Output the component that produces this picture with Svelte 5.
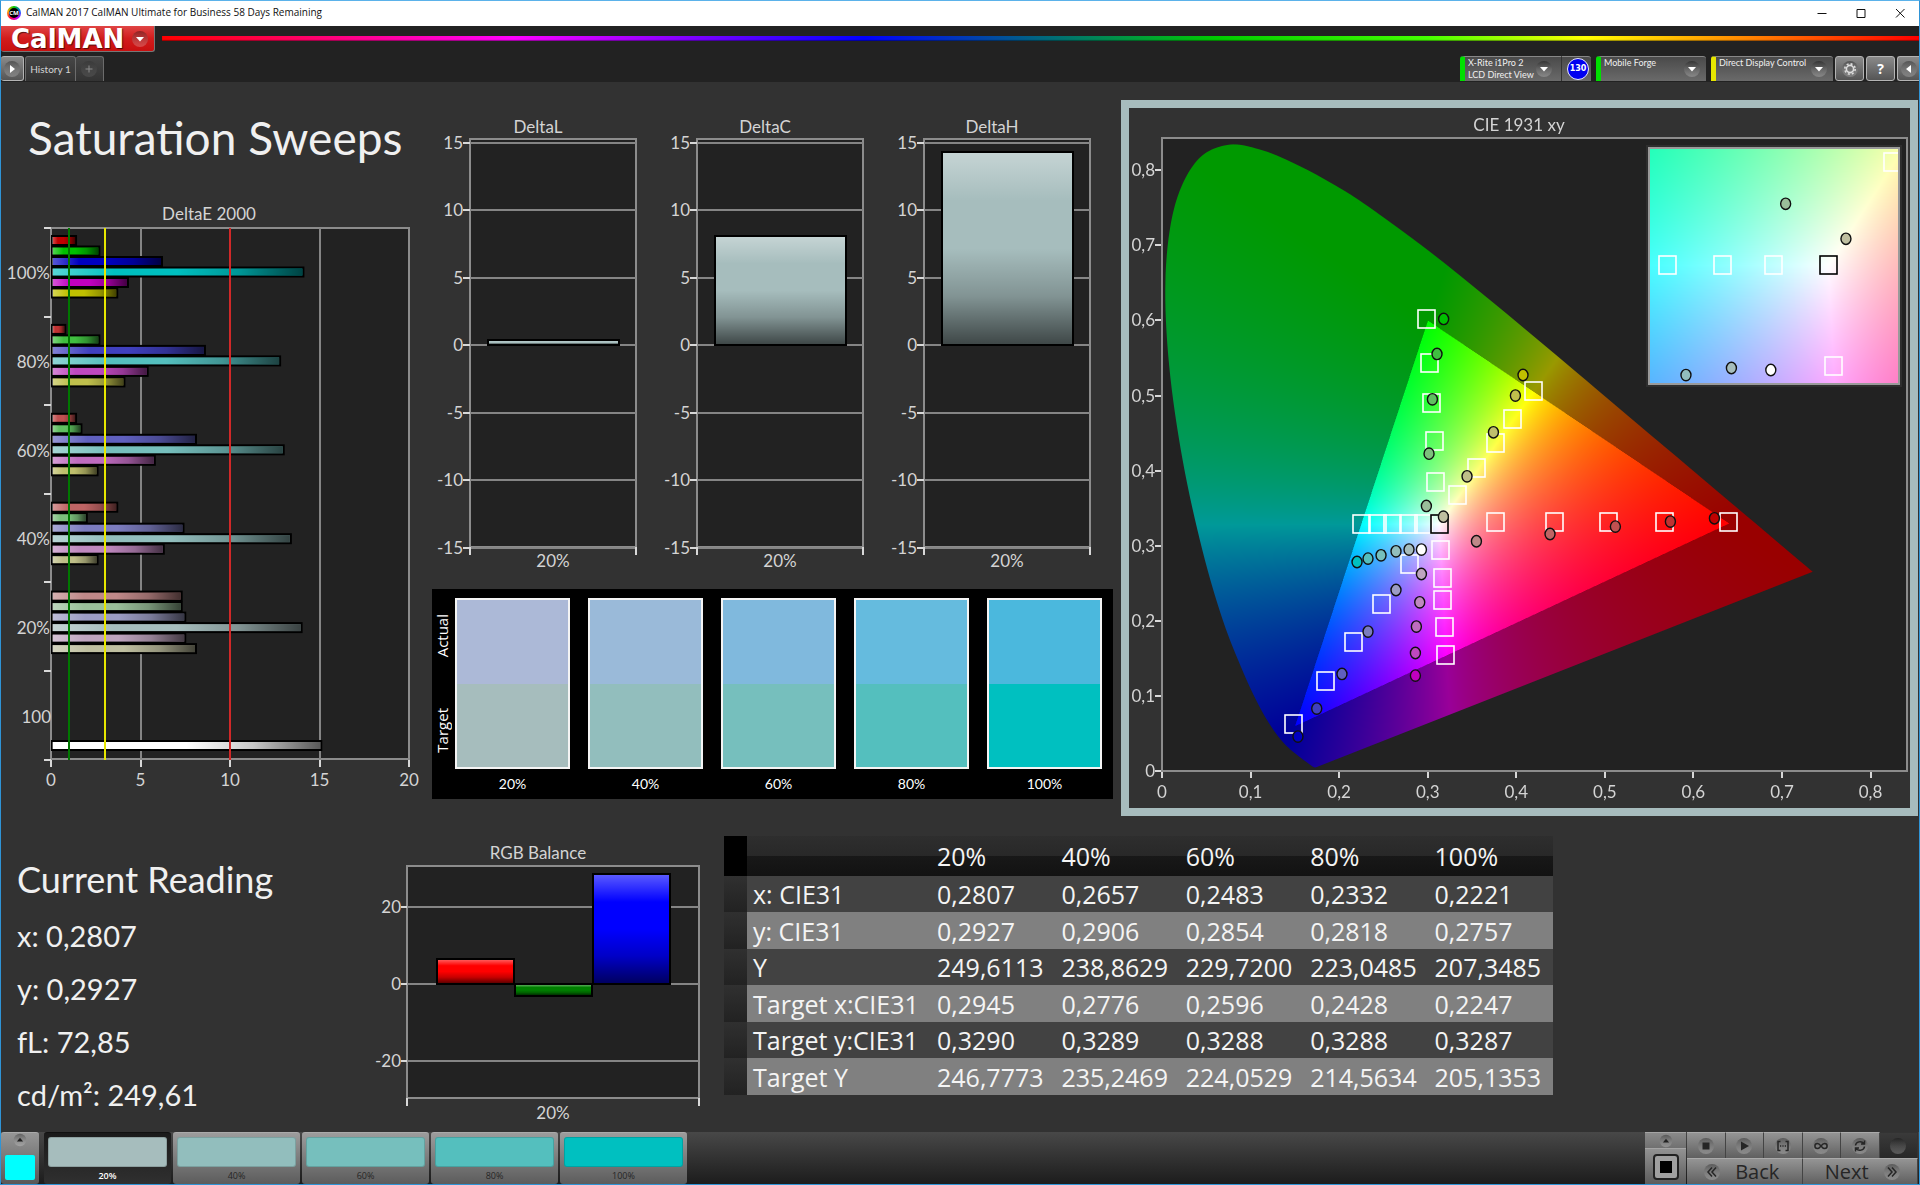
<script lang="ts">
  type Point = [number, number];
  type Kind = 'square' | 'circle';

  const levels = ['20%', '40%', '60%', '80%', '100%'];
  const targetColors = ['#a6bdbd', '#92bebd', '#76bfbd', '#54bfbe', '#00c0c0'];
  const actualColors = ['#acb9d7', '#9abad9', '#80b9dd', '#65bbde', '#4bb8dd'];

  // Bar and marker colours by saturation, red / green / blue / cyan / magenta / yellow
  const palette: Record<string, string[]> = {
    '100%': ['#c00000', '#00c000', '#0000c0', '#00c0c0', '#c000c0', '#c0c000'],
    '80%': ['#c03232', '#40bf40', '#4040bf', '#54bfbe', '#bf48bf', '#bfbf4c'],
    '60%': ['#c05050', '#60bf60', '#6060bf', '#76bfbd', '#bf6cbf', '#bfbf6c'],
    '40%': ['#bf6464', '#7cbf7c', '#7c7cbf', '#92bebd', '#bf88bf', '#bfbf88'],
    '20%': ['#bf8888', '#9abf9a', '#9c9cc4', '#a6bdbd', '#bfa4bf', '#bfbfa0']
  };

  // ---- DeltaE 2000 ----
  const deltaE = [
    { label: '100%', values: [1.4, 2.7, 6.2, 14.1, 4.3, 3.7] },
    { label: '80%', values: [0.8, 2.7, 8.6, 12.8, 5.4, 4.1] },
    { label: '60%', values: [1.4, 1.7, 8.1, 13.0, 5.8, 2.6] },
    { label: '40%', values: [3.7, 2.0, 7.4, 13.4, 6.3, 2.6] },
    { label: '20%', values: [7.3, 7.3, 7.5, 14.0, 7.5, 8.1] }
  ];
  const limits = [
    { at: 1, color: '#007800' },
    { at: 3, color: '#e6e600' },
    { at: 10, color: '#d02828' }
  ];
  const ex = (v: number) => 50 + v * 17.9;
  const ey = (row: number) => Math.round(28 + row * 88.6);

  // ---- DeltaL / DeltaC / DeltaH ----
  const deltas = [
    { title: 'DeltaL', value: 0.4 },
    { title: 'DeltaC', value: 8.1 },
    { title: 'DeltaH', value: 14.3 }
  ];
  const dy = (v: number) => Math.round(236 - v * 13.5);

  // ---- RGB balance ----
  const rgb = [
    { color: '#ff0000', value: 6.5 },
    { color: '#008000', value: -3 },
    { color: '#0000ff', value: 28.5 }
  ];
  const by = (v: number) => Math.round(144 - v * 3.85);

  // ---- CIE 1931 ----
  const CIE_W = 781;
  const CIE_H = 700;
  const cx = (x: number) => 33 + x * 885.7;
  const cy = (y: number) => 663 - y * 751;

  const INSET = { left: 520, top: 40, width: 250, height: 236, x0: 0.2535, y0: 0.37 };
  const ix = (x: number) => INSET.left + (x - INSET.x0) * 3030;
  const iy = (y: number) => INSET.top + (INSET.y0 - y) * 2846;

  // Spectral locus, 380 to 700 nm
  const locus: Point[] = [
    [0.1741, 0.005], [0.1714, 0.0051], [0.1644, 0.0109], [0.1566, 0.0177], [0.144, 0.0297],
    [0.1355, 0.0399], [0.1241, 0.0578], [0.1096, 0.0868], [0.0913, 0.1327], [0.0687, 0.2007],
    [0.0454, 0.295], [0.0235, 0.4127], [0.0082, 0.5384], [0.0039, 0.6548], [0.0139, 0.7502],
    [0.0389, 0.812], [0.0743, 0.8338], [0.1142, 0.8262], [0.1547, 0.8059], [0.1929, 0.7816],
    [0.2296, 0.7543], [0.3016, 0.6923], [0.3731, 0.6245], [0.4441, 0.5547], [0.5125, 0.4866],
    [0.5752, 0.4242], [0.627, 0.3725], [0.6658, 0.334], [0.6915, 0.3083], [0.7347, 0.2653]
  ];

  const targets: Point[] = [
    [0.2985, 0.6015], [0.3019, 0.5433], [0.3034, 0.49], [0.3071, 0.439], [0.3087, 0.3853],
    [0.4189, 0.5065], [0.3956, 0.4692], [0.376, 0.4367], [0.355, 0.4035], [0.3335, 0.367],
    [0.6395, 0.3316], [0.5668, 0.3316], [0.5032, 0.3316], [0.443, 0.3316], [0.376, 0.3316],
    [0.2247, 0.3287], [0.2428, 0.3288], [0.2596, 0.3288], [0.2776, 0.3289], [0.2945, 0.329],
    [0.3192, 0.155], [0.318, 0.1923], [0.3158, 0.2273], [0.3158, 0.257], [0.3143, 0.2948],
    [0.1484, 0.0626], [0.1837, 0.1204], [0.2153, 0.1714], [0.2469, 0.222], [0.2793, 0.2762]
  ];

  // One list per hue, 100% saturation first
  const readings: Point[][] = [
    [[0.6237, 0.3365], [0.574, 0.3321], [0.5119, 0.3254], [0.4381, 0.3156], [0.355, 0.3059]],
    [[0.318, 0.6019], [0.3105, 0.5553], [0.3053, 0.4949], [0.3015, 0.4226], [0.2985, 0.3529]],
    [[0.1535, 0.0458], [0.1747, 0.0831], [0.2032, 0.1292], [0.2326, 0.1856], [0.2642, 0.241]],
    [[0.2202, 0.2783], [0.2326, 0.2828], [0.2473, 0.2872], [0.2642, 0.2925], [0.2789, 0.2948]],
    [[0.2861, 0.127], [0.2861, 0.1571], [0.2872, 0.1923], [0.291, 0.2246], [0.2929, 0.2623]],
    [[0.4076, 0.5273], [0.399, 0.4999], [0.3742, 0.451], [0.3444, 0.3924], [0.3177, 0.3387]]
  ];
  const order = ['100%', '80%', '60%', '40%', '20%'];

  const insetTargets: Point[] = [[0.2596, 0.329], [0.2776, 0.329], [0.2945, 0.329], [0.3141, 0.2934], [0.3337, 0.3652]];
  const insetReadings: { at: Point; color: string }[] = [
    { at: [0.2986, 0.3504], color: '#9abf9a' },
    { at: [0.3185, 0.3381], color: '#bfbfa0' },
    { at: [0.2657, 0.2902], color: '#92bebd' },
    { at: [0.2807, 0.2927], color: '#a6bdbd' },
    { at: [0.2937, 0.292], color: '#ffffff' }
  ];

  // xy -> linear RGB at full brightness, dimmed outside the display gamut
  function chroma(x: number, y: number): number[] {
    const X = x / y;
    const Z = (1 - x - y) / y;
    const lin = [
      3.2406 * X - 1.5372 - 0.4986 * Z,
      -0.9689 * X + 1.8758 + 0.0415 * Z,
      0.0557 * X - 0.204 + 1.057 * Z
    ];
    const dim = Math.min(...lin) < 0 ? 0.6 : 1;
    const max = Math.max(...lin);
    return lin.map((c) => (Math.max(c, 0) / max) * 255 * dim);
  }

  function locusPath(): Path2D {
    const p = locus.map(([x, y]) => [cx(x), cy(y)]);
    const path = new Path2D();
    path.moveTo(p[0][0], p[0][1]);
    for (let i = 0; i < p.length - 1; i++) {
      const a = p[Math.max(i - 1, 0)];
      const b = p[i];
      const c = p[i + 1];
      const d = p[Math.min(i + 2, p.length - 1)];
      path.bezierCurveTo(
        b[0] + (c[0] - a[0]) / 6, b[1] + (c[1] - a[1]) / 6,
        c[0] - (d[0] - b[0]) / 6, c[1] - (d[1] - b[1]) / 6,
        c[0], c[1]
      );
    }
    path.closePath();
    return path;
  }

  let field = $state<HTMLCanvasElement>();
  const SCALE = 2;

  $effect(() => {
    const ctx = field?.getContext('2d');
    if (!ctx) return;
    const w = CIE_W * SCALE;
    const h = CIE_H * SCALE;
    const img = ctx.createImageData(w, h);
    for (let j = 0; j < h; j++) {
      const y = Math.max((663 - j / SCALE) / 751, 0.001);
      for (let i = 0; i < w; i++) {
        const [r, g, b] = chroma((i / SCALE - 33) / 885.7, y);
        img.data.set([r, g, b, 255], (j * w + i) * 4);
      }
    }
    ctx.putImageData(img, 0, 0);
    ctx.scale(SCALE, SCALE);
    ctx.globalCompositeOperation = 'destination-in';
    ctx.fill(locusPath());

    // Enlarged view round the white point
    const iw = INSET.width * SCALE;
    const ih = INSET.height * SCALE;
    const zoomed = ctx.createImageData(iw, ih);
    for (let j = 0; j < ih; j++) {
      for (let i = 0; i < iw; i++) {
        const [r, g, b] = chroma(INSET.x0 + i / SCALE / 3030, INSET.y0 - j / SCALE / 2846);
        zoomed.data.set([r, g, b, 255], (j * iw + i) * 4);
      }
    }
    ctx.putImageData(zoomed, INSET.left * SCALE, INSET.top * SCALE);
  });

  const tenths = [0, 1, 2, 3, 4, 5, 6, 7, 8];
  const tenth = (n: number) => (n ? `0,${n}` : '0');

  const rows = [
    ['x: CIE31', '0,2807', '0,2657', '0,2483', '0,2332', '0,2221'],
    ['y: CIE31', '0,2927', '0,2906', '0,2854', '0,2818', '0,2757'],
    ['Y', '249,6113', '238,8629', '229,7200', '223,0485', '207,3485'],
    ['Target x:CIE31', '0,2945', '0,2776', '0,2596', '0,2428', '0,2247'],
    ['Target y:CIE31', '0,3290', '0,3289', '0,3288', '0,3288', '0,3287'],
    ['Target Y', '246,7773', '235,2469', '224,0529', '214,5634', '205,1353']
  ];

  let selected = $state('20%');
</script>

{#snippet marker(kind: Kind, x: number, y: number, color: string)}
  {#if kind === 'square'}
    <rect x={Math.round(x) - 8} y={Math.round(y) - 9} width="17" height="18" fill="none" stroke={color} stroke-width="1.6" />
  {:else}
    <ellipse cx={x} cy={y} rx="5" ry="5.7" fill={color} stroke="#101010" stroke-width="1.4" />
  {/if}
{/snippet}

{#snippet knob(path: string)}
  <svg class="knob" viewBox="0 0 18 18" aria-hidden="true">
    <circle cx="9" cy="9" r="8" fill="url(#knob)" />
    <path d={path} />
  </svg>
{/snippet}

<svg class="defs" width="0" height="0" aria-hidden="true">
  <defs>
    <linearGradient id="glossX" x1="0" y1="0" x2="1" y2="0">
      <stop offset="0" stop-color="#fff" stop-opacity="0.35" />
      <stop offset="0.25" stop-color="#fff" stop-opacity="0" />
      <stop offset="0.5" stop-color="#000" stop-opacity="0" />
      <stop offset="0.75" stop-color="#000" stop-opacity="0.22" />
      <stop offset="1" stop-color="#000" stop-opacity="0.65" />
    </linearGradient>
    <linearGradient id="glossY" x1="0" y1="0" x2="0" y2="1">
      <stop offset="0" stop-color="#fff" stop-opacity="0.35" />
      <stop offset="0.25" stop-color="#fff" stop-opacity="0" />
      <stop offset="0.5" stop-color="#000" stop-opacity="0" />
      <stop offset="0.75" stop-color="#000" stop-opacity="0.22" />
      <stop offset="1" stop-color="#000" stop-opacity="0.62" />
    </linearGradient>
    <linearGradient id="knob" x1="0" y1="0" x2="0" y2="1">
      <stop offset="0" stop-color="#000" stop-opacity="0.35" />
      <stop offset="1" stop-color="#fff" stop-opacity="0.22" />
    </linearGradient>
  </defs>
</svg>

<div class="window">
  <div class="titlebar">
    <span class="app-icon">CM</span>
    <span class="caption">CalMAN 2017 CalMAN Ultimate for Business 58 Days Remaining</span>
    <button type="button" aria-label="Minimize"><svg viewBox="0 0 10 10"><path d="M0.5 5.5h9" /></svg></button>
    <button type="button" aria-label="Maximize"><svg viewBox="0 0 10 10"><path d="M1 1.5h8v8h-8z" /></svg></button>
    <button type="button" aria-label="Close"><svg viewBox="0 0 10 10"><path d="M1 1l8.500 8.500M9.500 1l-8.500 8.500" /></svg></button>
  </div>

  <header>
    <div class="brand-row">
      <button class="brand" type="button">
        <span>CalMAN</span>
        {@render knob('M5 7h8l-4 4.500z')}
      </button>
      <div class="spectrum"></div>
    </div>
    <div class="tool-row">
      <button class="square first" type="button" aria-label="Expand">{@render knob('M7 5l5 4-5 4z')}</button>
      <button class="tab history" type="button">History 1</button>
      <button class="tab add" type="button" aria-label="Add history">{@render knob('M5.500 8.500h3v-3h1v3h3v1h-3v3h-1v-3h-3z')}</button>
      <span class="spacer"></span>
      <button class="device meter" type="button">
        <span>X-Rite i1Pro 2<br />LCD Direct View</span>
        {@render knob('M5 7h8l-4 4.500z')}
      </button>
      <button class="count" type="button"><b>130</b></button>
      <button class="device source" type="button">
        <span>Mobile Forge</span>
        {@render knob('M5 7h8l-4 4.500z')}
      </button>
      <button class="device display" type="button">
        <span>Direct Display Control</span>
        {@render knob('M5 7h8l-4 4.500z')}
      </button>
      <button class="square" type="button" aria-label="Settings">
        <svg class="knob" viewBox="0 0 18 18">
          <circle cx="9" cy="9" r="8" fill="url(#knob)" />
          <circle cx="9" cy="9" r="3.600" class="ring" />
          <circle cx="9" cy="9" r="5.200" class="teeth" />
        </svg>
      </button>
      <button class="square help" type="button" aria-label="Help">?</button>
      <button class="square last" type="button" aria-label="Collapse">{@render knob('M11 5l-5 4 5 4z')}</button>
    </div>
  </header>

  <main>
    <div class="upper">
      <section class="sweeps">
        <h1>Saturation Sweeps</h1>
        <svg class="chart" viewBox="0 0 431 600" role="img" aria-label="DeltaE 2000">
          <text class="mid" x="208" y="20">DeltaE 2000</text>
          <rect class="plot" x="50" y="28" width="358" height="531" />
          {#each [5, 10, 15] as v}
            <line class="grid" x1={Math.round(ex(v))} x2={Math.round(ex(v))} y1="28" y2="559" />
          {/each}
          {#each [0, 5, 10, 15, 20] as v}
            <line class="tick" x1={Math.round(ex(v))} x2={Math.round(ex(v))} y1="560" y2="567" />
            <text class="mid" x={ex(v)} y="586">{v}</text>
          {/each}
          {#each [0, 1, 2, 3, 4, 5, 6] as row}
            <line class="tick" x1="43" x2="50" y1={ey(row)} y2={ey(row)} />
          {/each}
          {#each deltaE as group, g}
            <text class="end" x="49" y={79 + Math.round(g * 88.8)}>{group.label}</text>
            {#each group.values as v, i}
              {@const top = 36 + g * 88.9 + i * 10.5}
              <rect class="bar" x="51" y={top} width={ex(v) - 51} height="9" fill={palette[group.label][i]} />
              <rect x="51" y={top + 1} width={ex(v) - 52} height="7" fill="url(#glossX)" />
            {/each}
          {/each}
          <text class="end" x="50" y="523">100</text>
          <rect class="bar" x="51" y="541" width={ex(15.1) - 51} height="9" fill="#fff" />
          <rect x="51" y="542" width={ex(15.1) - 52} height="7" fill="url(#glossX)" />
          {#each limits as limit}
            <line x1={Math.round(ex(limit.at))} x2={Math.round(ex(limit.at))} y1="28" y2="560" stroke={limit.color} stroke-width="2" />
          {/each}
        </svg>
      </section>

      <section class="middle">
        <div class="deltas">
          {#each deltas as d}
            <svg class="chart" viewBox="0 0 227 470" role="img" aria-label={d.title}>
              <text class="mid" x="106" y="24">{d.title}</text>
              <rect class="plot" x="38" y="30" width="166" height="408" />
              {#each [15, 10, 5, 0, -5, -10, -15] as v}
                <line class="grid" x1="38" x2="204" y1={dy(v)} y2={dy(v)} />
                <line class="tick" x1="31" x2="38" y1={dy(v)} y2={dy(v)} />
                <text class="end" x="31" y={dy(v) + 6}>{v}</text>
              {/each}
              <path class="tick" d="M38 438v8M204 438v8" />
              <rect class="bar" x="56" y={dy(d.value)} width="131" height={236 - dy(d.value)} fill="#a6bdbd" />
              <rect x="57" y={dy(d.value) + 1} width="129" height={234 - dy(d.value)} fill="url(#glossY)" />
              <text class="mid" x="121" y="458">20%</text>
            </svg>
          {/each}
        </div>

        <div class="swatches">
          <div class="side"><span>Actual</span><span>Target</span></div>
          {#each levels as level, i}
            <figure>
              <div class="pair">
                <div style:background={actualColors[i]}></div>
                <div style:background={targetColors[i]}></div>
              </div>
              <figcaption>{level}</figcaption>
            </figure>
          {/each}
        </div>
      </section>

      <section class="cie">
        <svg class="chart" viewBox="0 0 {CIE_W} {CIE_H}" aria-hidden="true">
          <rect class="plot" x="33" y="30" width="745" height="633" />
          <rect x="517" y="37" width="256" height="242" fill="#2e2e2e" />
        </svg>
        <canvas bind:this={field} width={CIE_W * SCALE} height={CIE_H * SCALE}></canvas>
        <svg class="chart overlay" viewBox="0 0 {CIE_W} {CIE_H}" role="img" aria-label="CIE 1931 xy">
          <text class="mid" x="390" y="23">CIE 1931 xy</text>
          {#each tenths as n}
            <line class="tick" x1={Math.round(cx(n / 10))} x2={Math.round(cx(n / 10))} y1="664" y2="670" />
            <text class="mid" x={cx(n / 10)} y="690">{tenth(n)}</text>
            <line class="tick" x1="26" x2="32" y1={Math.round(cy(n / 10))} y2={Math.round(cy(n / 10))} />
            <text class="end" x="26" y={Math.round(cy(n / 10)) + 6}>{tenth(n)}</text>
          {/each}
          {#each targets as [x, y]}
            {@render marker('square', cx(x), cy(y), '#ffffff')}
          {/each}
          {@render marker('square', cx(0.3127), cy(0.329), '#000000')}
          {#each readings as hue, h}
            {#each hue as [x, y], s}
              {@render marker('circle', cx(x), cy(y), palette[order[s]][h])}
            {/each}
          {/each}
          {@render marker('circle', cx(0.2929), cy(0.2948), '#ffffff')}

          <svg x={INSET.left} y={INSET.top} width={INSET.width} height={INSET.height} viewBox="520 40 250 236">
            {#each insetTargets as [x, y]}
              {@render marker('square', ix(x), iy(y), '#ffffff')}
            {/each}
            {@render marker('square', ix(0.3127), iy(0.329), '#000000')}
            {#each insetReadings as r}
              {@render marker('circle', ix(r.at[0]), iy(r.at[1]), r.color)}
            {/each}
          </svg>
          <rect class="frame" x="520" y="40" width="250" height="236" />
        </svg>
      </section>
    </div>

    <div class="lower">
      <section class="reading">
        <h2>Current Reading</h2>
        <p>x: 0,2807</p>
        <p>y: 0,2927</p>
        <p>fL: 72,85</p>
        <p>cd/m²: 249,61</p>
      </section>

      <section class="balance">
        <svg class="chart" viewBox="0 0 354 290" role="img" aria-label="RGB Balance">
          <text class="mid" x="168" y="19">RGB Balance</text>
          <rect class="plot" x="37" y="26" width="292" height="232" />
          {#each [20, 0, -20] as v}
            <line class="grid" x1="37" x2="329" y1={by(v)} y2={by(v)} />
            <line class="tick" x1="31" x2="37" y1={by(v)} y2={by(v)} />
            <text class="end" x="31" y={by(v) + 6}>{v}</text>
          {/each}
          <path class="tick" d="M37 258v8M329 258v8" />
          {#each rgb as bar, i}
            {@const top = Math.min(by(bar.value), 144)}
            {@const height = Math.abs(by(bar.value) - 144)}
            <rect class="bar" x={67 + i * 78} y={top} width="77" {height} fill={bar.color} />
            <rect x={68 + i * 78} y={top + 1} width="75" height={height - 2} fill="url(#glossY)" />
          {/each}
          <text class="mid" x="183" y="279">20%</text>
        </svg>
      </section>

      <section class="data">
        <table>
          <thead>
            <tr>
              <th class="handle"></th>
              <th class="name"></th>
              {#each levels as level}<th scope="col">{level}</th>{/each}
            </tr>
          </thead>
          <tbody>
            {#each rows as [name, ...cells]}
              <tr>
                <td class="handle"></td>
                <th class="name" scope="row">{name}</th>
                {#each cells as cell}<td>{cell}</td>{/each}
              </tr>
            {/each}
          </tbody>
        </table>
      </section>
    </div>
  </main>

  <footer>
    <button class="current" type="button" aria-label="Current colour">
      {@render knob('M5 11h8l-4-5z')}
      <span></span>
    </button>
    <div class="levels">
      {#each levels as level, i}
        <button type="button" class:active={selected === level} onclick={() => (selected = level)}>
          <span style:background={targetColors[i]}></span>
          {level}
        </button>
      {/each}
    </div>
    <span class="spacer"></span>
    <div class="stop">
      <button type="button" aria-label="More">{@render knob('M5 11h8l-4-5z')}</button>
      <button type="button" aria-label="Pattern"><span></span></button>
    </div>
    <div class="transport">
      <button type="button" aria-label="Stop">{@render knob('M5.500 5.500h7v7h-7z')}</button>
      <button type="button" aria-label="Read">{@render knob('M6 4.500l8 4.500-8 4.500z')}</button>
      <button type="button" aria-label="Read series">
        <svg class="knob line" viewBox="0 0 18 18">
          <circle cx="9" cy="9" r="8" fill="url(#knob)" />
          <path d="M6.500 4.500h-2.500v9h2.500M11.500 4.500h2.500v9h-2.500" />
          <path class="dots" d="M6 9h6" />
        </svg>
      </button>
      <button type="button" aria-label="Read continuously">
        <svg class="knob line" viewBox="0 0 18 18">
          <circle cx="9" cy="9" r="8" fill="url(#knob)" />
          <path d="M9 9c-1.500-2-2.500-2.500-3.600-2.500a2.500 2.500 0 0 0 0 5c1.100 0 2.100-.5 3.600-2.500s2.500-2.500 3.600-2.500a2.500 2.500 0 0 1 0 5c-1.100 0-2.100-.5-3.600-2.500z" />
        </svg>
      </button>
      <button type="button" aria-label="Repeat">
        <svg class="knob line" viewBox="0 0 18 18">
          <circle cx="9" cy="9" r="8" fill="url(#knob)" />
          <path d="M4.500 8.500c.3-4 6-5 8.500-2M13.500 3.500v3.500h-3.500M13.500 9.500c-.3 4-6 5-8.500 2M4.500 14.500v-3.500h3.500" />
        </svg>
      </button>
      <button class="off" type="button" aria-label="Indicator">{@render knob('')}</button>
      <button class="nav back" type="button">
        <svg class="knob line" viewBox="0 0 18 18">
          <circle cx="9" cy="9" r="8" fill="url(#knob)" />
          <path d="M9 4.500l-4 4.500 4 4.500M13 4.500l-4 4.500 4 4.500" />
        </svg>
        Back
      </button>
      <button class="nav next" type="button">
        Next
        <svg class="knob line" viewBox="0 0 18 18">
          <circle cx="9" cy="9" r="8" fill="url(#knob)" />
          <path d="M5 4.500l4 4.500-4 4.500M9 4.500l4 4.500-4 4.500" />
        </svg>
      </button>
    </div>
  </footer>
</div>

<style>
  :global(body) {
    margin: 0;
    background: #323232;
  }
  .window {
    display: flex;
    flex-direction: column;
    box-sizing: border-box;
    min-height: 100vh;
    border: 1px solid #2f94d6;
    border-top-color: #5bb2ea;
    background: #323232;
    color: #d4d4d4;
    font-family: Lato, 'Noto Sans', sans-serif;
  }
  .defs {
    position: absolute;
  }
  button {
    box-sizing: border-box;
    margin: 0;
    padding: 0;
    border: 0;
    background: none;
    color: inherit;
    font: inherit;
  }
  .spacer {
    flex: 1;
  }
  .knob {
    display: block;
    flex: none;
    width: 18px;
    height: 18px;
    fill: #fff;
  }

  /* Title bar */
  .titlebar {
    display: flex;
    height: 25px;
    background: #fff;
    color: #111;
    font: 10px/23px 'Open Sans', sans-serif;
  }
  .app-icon {
    box-sizing: border-box;
    width: 14px;
    height: 14px;
    margin: 5px 5px 0 6px;
    border: 2px solid transparent;
    border-radius: 50%;
    background:
      linear-gradient(#000, #000) padding-box,
      conic-gradient(#0c0, #06f, #c0f, #f04, #fa0, #0c0) border-box;
    color: #fff;
    font: bold 6px/10px 'Open Sans', sans-serif;
    text-align: center;
  }
  .caption {
    flex: 1;
  }
  .titlebar button {
    display: grid;
    place-items: center;
    width: 39px;
    height: 24px;
  }
  .titlebar svg {
    width: 10px;
    height: 10px;
    fill: none;
    stroke: #111;
  }

  /* Header */
  header {
    height: 56px;
    background: #222;
  }
  .brand-row {
    display: flex;
    gap: 7px;
    height: 30px;
  }
  .brand {
    display: flex;
    align-items: center;
    justify-content: space-between;
    width: 154px;
    height: 26px;
    padding: 0 5px 0 10px;
    border: solid #777;
    border-width: 0 1px 1px 0;
    border-radius: 0 0 3px 3px;
    background: linear-gradient(#e04545, #d21c1c 50%, #c81010);
    color: #fff;
    font: bold 26px/24px 'DejaVu Sans', sans-serif;
    text-shadow: 1px 1px 1px rgba(0, 0, 0, 0.6);
  }
  .spectrum {
    flex: 1;
    height: 5px;
    margin-top: 10px;
    background: linear-gradient(to right, #f00, #f0f 20%, #00f 40%, #0c0 60%, #4f0 72%, #ff0 81%, #f80 90%, #f00);
    box-shadow: inset 0 -1px 1px rgba(0, 0, 0, 0.4);
  }
  .tool-row {
    display: flex;
    height: 25px;
    font-size: 10px;
  }
  .square {
    display: grid;
    place-items: center;
    width: 29px;
    height: 25px;
    margin-left: 2px;
    border: 1px solid #b4b4b4;
    border-radius: 3px;
    background: linear-gradient(#8a8a8a, #555);
    color: #fff;
  }
  .square.first {
    width: 23px;
    margin: 0 1px 0 0;
    border-left: 0;
  }
  .square.last {
    width: 22px;
    border-right: 0;
    border-radius: 3px 0 0 3px;
  }
  .square.help {
    font: bold 14px/20px 'Open Sans', sans-serif;
  }
  .ring {
    fill: none;
    stroke: #ddd;
    stroke-width: 1.6;
  }
  .teeth {
    fill: none;
    stroke: #ddd;
    stroke-width: 1.6;
    stroke-dasharray: 2 2.08;
  }
  .tab {
    border: solid #6c6c6c;
    border-width: 1px 1px 0;
    border-radius: 3px 3px 0 0;
    background: linear-gradient(#474747, #333);
  }
  .history {
    width: 51px;
  }
  .add {
    width: 28px;
    padding-left: 4px;
    border-left: 0;
  }
  .add .knob {
    opacity: 0.4;
  }
  .device {
    display: flex;
    align-items: center;
    justify-content: space-between;
    padding: 0 5px 0 3px;
    border-top: 1px solid #888;
    border-left: 5px solid #00e000;
    border-radius: 3px 3px 0 0;
    background: linear-gradient(#4a4a4a, #6a6a6a);
    color: #f0f0f0;
    font-size: 9px;
    line-height: 12px;
    text-align: left;
    white-space: nowrap;
  }
  .device span {
    align-self: flex-start;
  }
  .meter {
    width: 101px;
    padding-right: 8px;
    border-radius: 3px 0 0 0;
  }
  .source {
    width: 110px;
    margin-right: 5px;
  }
  .display {
    width: 122px;
    border-left-color: #e6e600;
  }
  .count {
    width: 30px;
    margin-right: 5px;
    padding-left: 5px;
    border-top: 1px solid #888;
    border-left: 1px solid #333;
    border-radius: 0 3px 0 0;
    background: linear-gradient(#4a4a4a, #6a6a6a);
  }
  .count b {
    display: block;
    width: 20px;
    height: 20px;
    border: 1px solid #e8e8ff;
    border-radius: 50%;
    background: #0000f0;
    color: #fff;
    font: bold 8px/20px 'DejaVu Sans', sans-serif;
  }

  /* Charts */
  main {
    flex: 1;
  }
  .upper {
    display: grid;
    grid-template-columns: 431fr 689fr 798fr;
    align-items: start;
  }
  .lower {
    display: grid;
    grid-template-columns: 369fr 354fr 829fr 366fr;
    padding-top: 1px;
  }
  .chart {
    display: block;
    width: 100%;
    fill: #d4d4d4;
    font-size: 17px;
  }
  .mid {
    text-anchor: middle;
  }
  .end {
    text-anchor: end;
  }
  .plot {
    fill: #222;
    stroke: #8c8c8c;
    stroke-width: 2;
  }
  .grid {
    stroke: #858585;
    stroke-width: 2;
  }
  .tick {
    fill: none;
    stroke: #d8d8d8;
    stroke-width: 2;
  }
  .bar {
    stroke: #000;
    stroke-width: 2;
  }
  .frame {
    fill: none;
    stroke: #9a9a9a;
    stroke-width: 2;
  }
  h1 {
    height: 118px;
    margin: 0;
    padding-left: 27px;
    color: #f0f0f0;
    font-size: 46px;
    font-weight: 400;
    line-height: 112px;
    white-space: nowrap;
  }
  .middle {
    padding: 27px 8px 0 0;
  }
  .deltas {
    display: grid;
    grid-template-columns: repeat(3, 1fr);
    margin-bottom: 10px;
  }
  .swatches {
    display: grid;
    grid-template-columns: 5px repeat(5, 1fr);
    column-gap: 18px;
    padding: 9px 11px 0 0;
    background: #000;
    color: #fff;
  }
  .side {
    display: flex;
    flex-direction: column;
    justify-content: space-between;
    box-sizing: border-box;
    height: 171px;
    padding: 16px 0;
    font: 15px/20px 'Open Sans', sans-serif;
  }
  .side span {
    width: 20px;
    text-align: center;
    writing-mode: vertical-rl;
    rotate: 180deg;
  }
  figure {
    margin: 0;
  }
  .pair {
    box-sizing: border-box;
    display: grid;
    grid-template-rows: 1fr 1fr;
    height: 171px;
    border: 2px solid #f4f4f4;
  }
  figcaption {
    font-size: 14px;
    line-height: 30px;
    text-align: center;
  }
  .cie {
    position: relative;
    margin: 18px 1px 0 0;
    border: 8px solid #a7bcbd;
    background: #323232;
  }
  .cie canvas,
  .overlay {
    position: absolute;
    inset: 0;
    width: 100%;
    height: 100%;
  }

  /* Reading, balance and data */
  .reading {
    padding: 32px 0 0 16px;
    color: #f0f0f0;
    font-size: 29px;
    line-height: 53px;
  }
  h2 {
    margin: 0;
    font-size: 36px;
    font-weight: 400;
    line-height: 60px;
  }
  p {
    margin: 0;
  }
  .balance {
    padding-top: 23px;
  }
  .data {
    padding-top: 19px;
  }
  table {
    width: 100%;
    border-collapse: collapse;
    table-layout: fixed;
    color: #f4f4f4;
    font: 25px/36px 'Open Sans', sans-serif;
  }
  th,
  td {
    padding: 0 0 0 6px;
    font-weight: 400;
    text-align: left;
    white-space: nowrap;
  }
  .handle {
    width: 17px;
    background: linear-gradient(#303030, #222);
  }
  .name {
    width: 178px;
  }
  thead tr {
    height: 40px;
    background: linear-gradient(#2e2e2e, #282828 50%, #181818 50%, #121212);
  }
  thead .handle {
    background: #000;
  }
  tbody tr {
    background: #424242;
  }
  tbody tr:nth-child(even) {
    height: 37px;
    background: #808080;
  }

  /* Bottom bar */
  footer {
    display: flex;
    height: 52px;
    background: linear-gradient(#484848, #1c1c1c);
    font: 9px/12px 'Open Sans', sans-serif;
  }
  .current {
    display: flex;
    flex-direction: column;
    align-items: center;
    gap: 8px;
    width: 38px;
    margin-right: 5px;
    border-top: 1px solid #aaa;
    border-radius: 3px;
    background: linear-gradient(#969696, #585858);
  }
  .current .knob,
  .stop .knob {
    width: 14px;
    height: 14px;
    fill: #222;
  }
  .current span {
    width: 30px;
    height: 25px;
    border-radius: 2px;
    background: #0ff;
  }
  .levels {
    display: grid;
    grid-template-columns: repeat(5, 127px);
    gap: 2px;
  }
  .levels button {
    display: flex;
    flex-direction: column;
    align-items: center;
    gap: 3px;
    padding: 4px 4px 0;
    border-top: 1px solid #aaa;
    border-radius: 3px;
    background: linear-gradient(#9c9c9c, #5c5c5c);
    color: #262626;
  }
  .levels span {
    box-sizing: border-box;
    width: 119px;
    height: 30px;
    border: 1px solid rgba(0, 0, 0, 0.15);
    border-radius: 3px;
  }
  .levels .active {
    border-color: #111;
    background: linear-gradient(#1a1a1a, #303030);
    color: #fff;
    font-weight: 600;
  }
  .stop {
    display: grid;
    grid-template-rows: 16px 1fr;
    width: 41px;
    margin-right: 1px;
  }
  .stop button {
    display: grid;
    place-items: center;
    border-top: 1px solid #a4a4a4;
    background: linear-gradient(#8a8a8a, #707070);
  }
  .stop button:last-child {
    background: linear-gradient(#929292, #5c5c5c);
  }
  .stop span {
    box-sizing: border-box;
    width: 26px;
    height: 26px;
    border: 2px solid #222;
    border-radius: 4px;
    background: linear-gradient(#000, #000) center / 12px 12px no-repeat, #a0a0a0;
  }
  .transport {
    display: grid;
    grid-template-columns: repeat(6, 1fr);
    grid-template-rows: 26px 26px;
    width: 231px;
    margin-right: 1px;
  }
  .transport button {
    display: flex;
    align-items: center;
    justify-content: center;
    border: solid #444;
    border-width: 1px 1px 0 0;
    border-top-color: #aaa;
    background: linear-gradient(#949494, #606060);
    color: #262626;
  }
  .transport .off {
    border-color: #333;
    background: linear-gradient(#3a3a3a, #282828);
  }
  .transport .nav {
    grid-column: span 3;
    gap: 14px;
    font-size: 20px;
  }
  .transport .back {
    padding-right: 6px;
  }
  .transport .next {
    padding-left: 6px;
  }
  .transport .knob {
    fill: #262626;
  }
  .line path {
    fill: none;
    stroke: #262626;
    stroke-width: 1.5;
  }
  .line .dots {
    stroke-dasharray: 1.2 1.2;
  }
</style>
